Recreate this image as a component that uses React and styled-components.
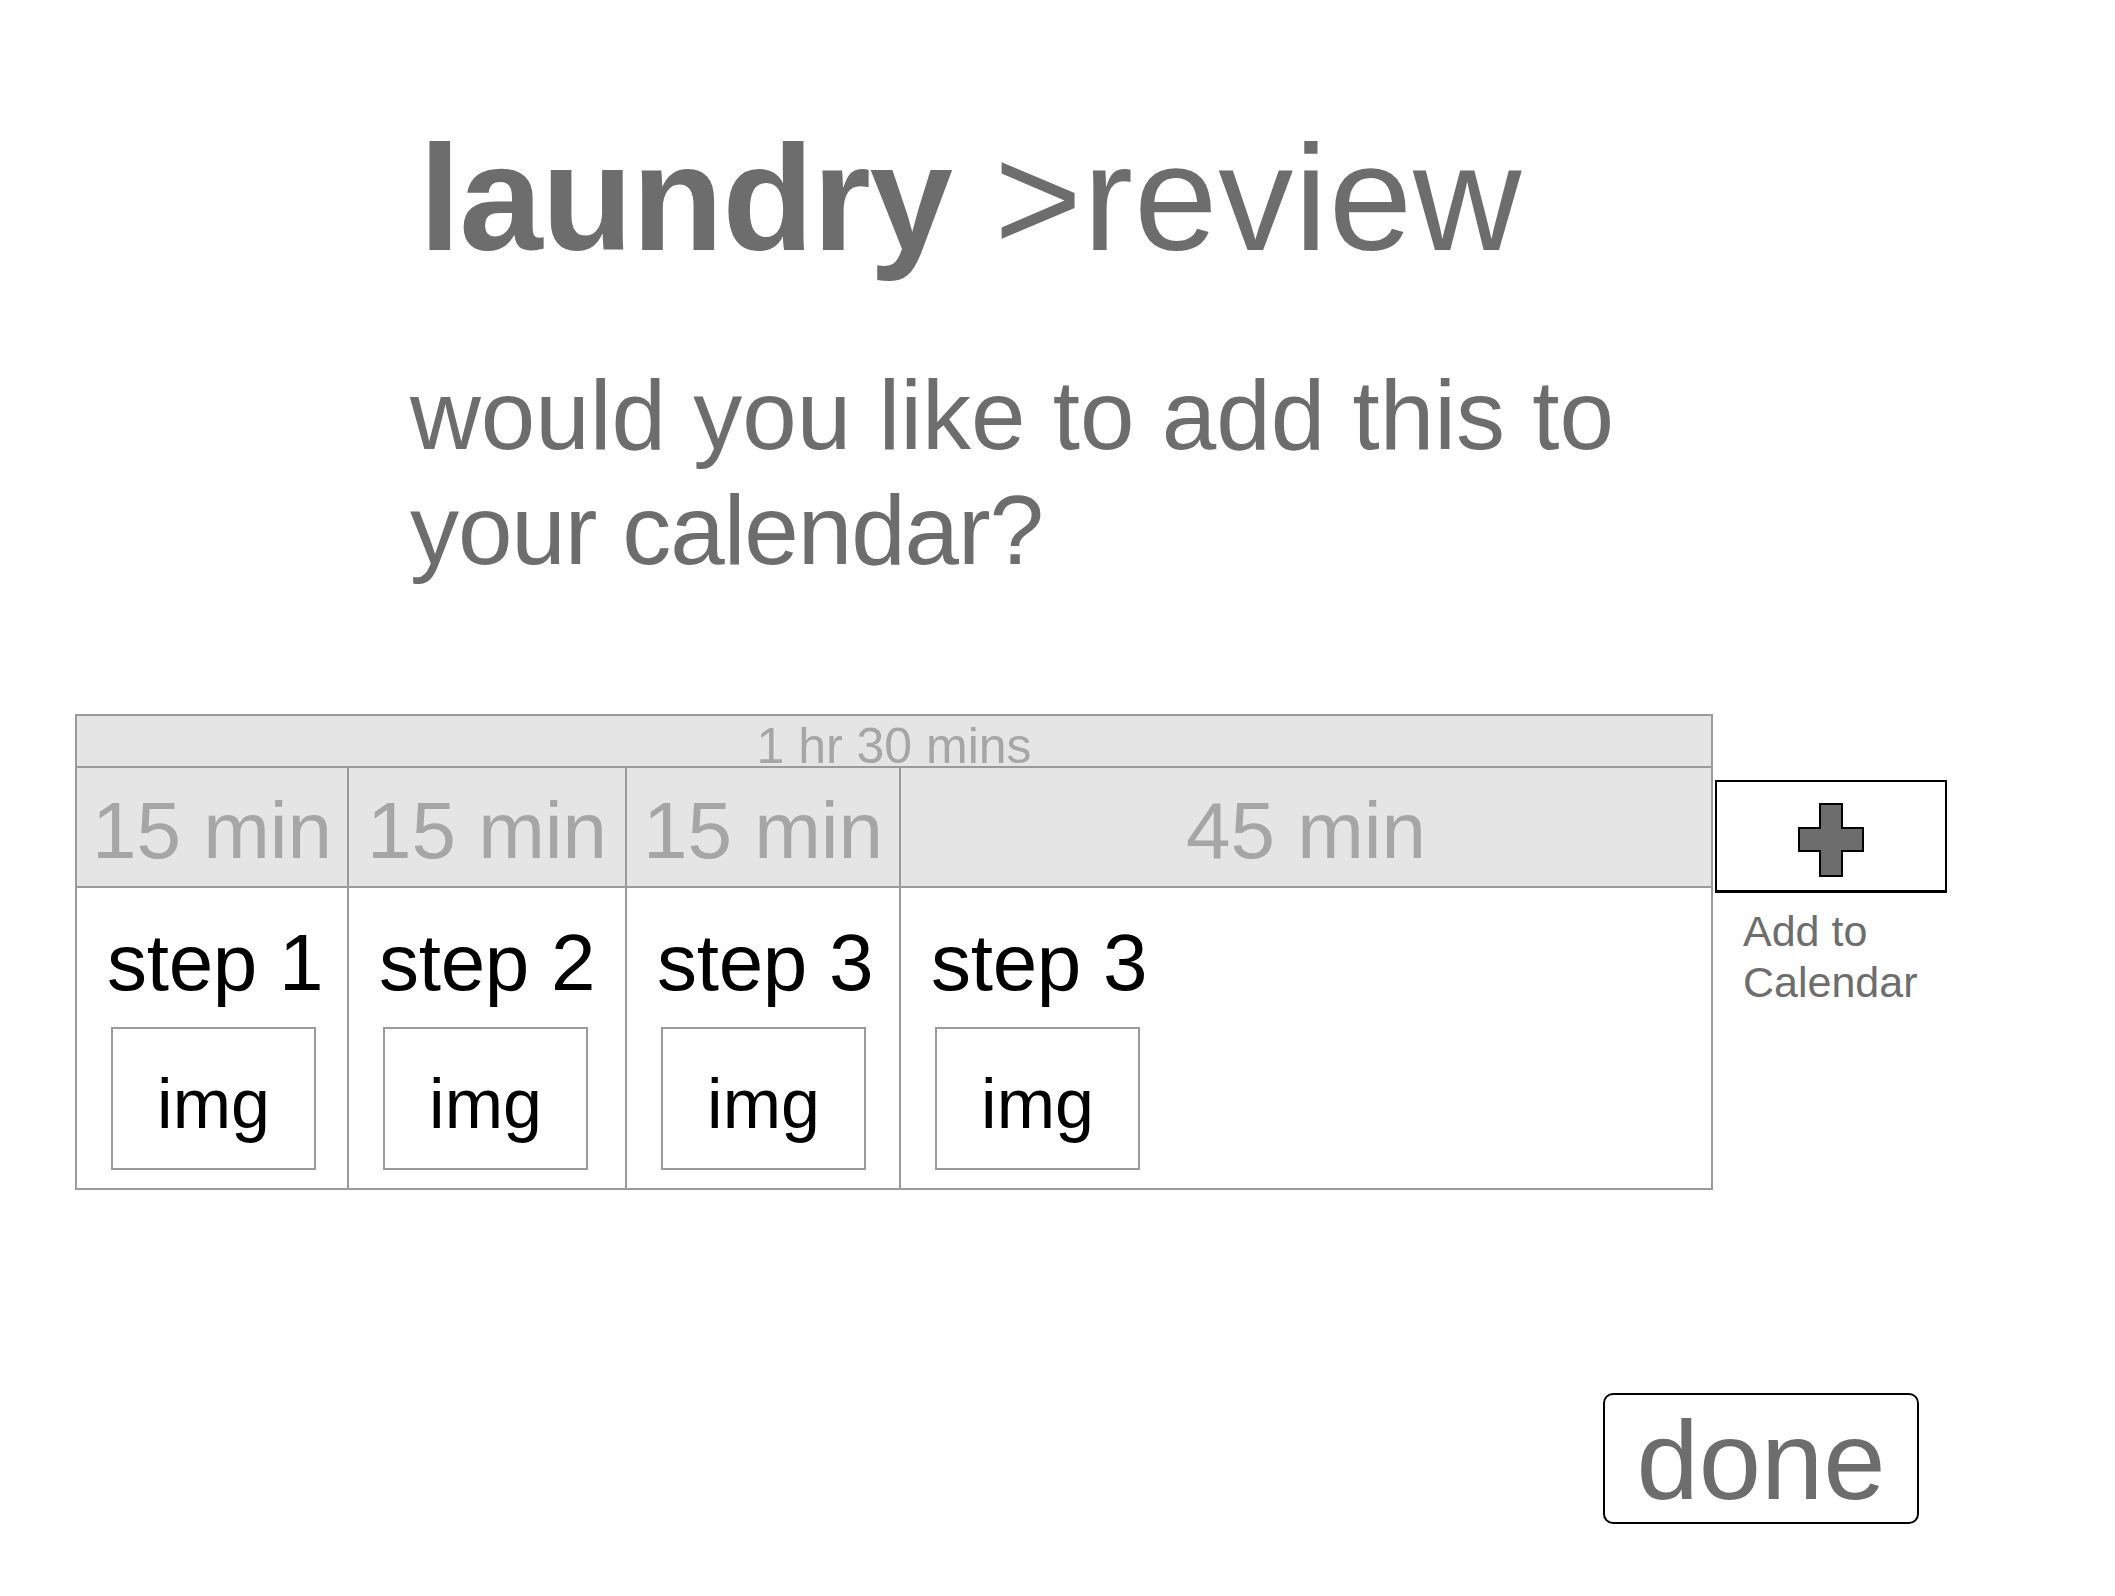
import React from 'react';
import styled, { createGlobalStyle } from 'styled-components';

const GlobalStyle = createGlobalStyle`
  html, body {
    margin: 0;
    padding: 0;
    background: #ffffff;
    font-family: "Liberation Sans", Arial, sans-serif;
  }
  * {
    box-sizing: border-box;
  }
`;

const steps = [
  { duration: '15 min', label: 'step 1' },
  { duration: '15 min', label: 'step 2' },
  { duration: '15 min', label: 'step 3' },
  { duration: '45 min', label: 'step 3' },
];

const PlusIcon = () => (
  <svg width="66" height="74" viewBox="0 0 66 74">
    <path
      d="M22 1 H44 V25 H65 V48 H44 V73 H22 V48 H1 V25 H22 Z"
      fill="#6d6d6d"
      stroke="#000"
      strokeWidth="2"
      strokeLinejoin="miter"
    />
  </svg>
);

const App = () => (
  <Page>
    <GlobalStyle />
    <Header>
      <Title>
        <strong>laundry</strong> &gt;review
      </Title>
      <Question>
        would you like to add this to
        <br />
        <Tight>your calendar?</Tight>
      </Question>
    </Header>

    <TimelineRow>
      <Table>
        <TotalBar>1 hr 30 mins</TotalBar>
        <Grid>
          {steps.map((step, i) => (
            <DurationCell key={`d${i}`} last={i === steps.length - 1}>
              {step.duration}
            </DurationCell>
          ))}
          {steps.map((step, i) => (
            <StepCell key={`s${i}`} last={i === steps.length - 1}>
              <StepLabel>{step.label}</StepLabel>
              <ImgBox>img</ImgBox>
            </StepCell>
          ))}
        </Grid>
      </Table>

      <CalendarAction>
        <AddButton type="button">
          <PlusIcon />
        </AddButton>
        <AddLabel>
          Add to
          <br />
          Calendar
        </AddLabel>
      </CalendarAction>
    </TimelineRow>

    <Footer>
      <DoneButton type="button">done</DoneButton>
    </Footer>
  </Page>
);

const Page = styled.div`
  width: 2115px;
  min-height: 1596px;
  padding-top: 123px;
  display: flex;
  flex-direction: column;
`;

const Header = styled.div`
  margin-left: 410px;
  color: #6d6d6d;
`;

const Title = styled.h1`
  margin: 0 0 0 9px;
  font-size: 150px;
  line-height: 150px;
  font-weight: 400;
  letter-spacing: 1px;
  white-space: nowrap;

  strong {
    font-weight: 700;
    letter-spacing: -1.3px;
  }
`;

const Question = styled.p`
  margin: 85px 0 0;
  font-size: 98px;
  line-height: 115px;
  font-weight: 400;
  white-space: nowrap;
`;

const Tight = styled.span`
  letter-spacing: -1.1px;
`;

const TimelineRow = styled.div`
  display: flex;
  align-items: flex-start;
  margin-top: 126px;
  margin-left: 75px;
`;

const Table = styled.div`
  width: 1638px;
  border: 2px solid #9a9a9a;
  background: #ffffff;
`;

const TotalBar = styled.div`
  height: 52px;
  padding-top: 5px;
  border-bottom: 2px solid #9a9a9a;
  background: #e5e5e5;
  color: #a6a6a6;
  font-size: 50px;
  line-height: 50px;
  text-align: center;
  white-space: nowrap;
`;

const Grid = styled.div`
  display: grid;
  grid-template-columns: 272px 278px 274px 1fr;
`;

const DurationCell = styled.div`
  height: 120px;
  padding-top: 7px;
  background: #e5e5e5;
  border-bottom: 2px solid #9a9a9a;
  border-right: ${props => (props.last ? 'none' : '2px solid #9a9a9a')};
  color: #a6a6a6;
  font-size: 80px;
  line-height: 112px;
  text-align: center;
  white-space: nowrap;
`;

const StepCell = styled.div`
  height: 300px;
  padding: 35px 0 0 34px;
  border-right: ${props => (props.last ? 'none' : '2px solid #9a9a9a')};
  display: flex;
  flex-direction: column;
  align-items: flex-start;
`;

const StepLabel = styled.div`
  margin-left: -4px;
  color: #000;
  font-size: 80px;
  line-height: 80px;
  letter-spacing: -0.3px;
  white-space: nowrap;
`;

const ImgBox = styled.div`
  margin-top: 24px;
  width: 205px;
  height: 143px;
  padding-top: 10px;
  border: 2px solid #9a9a9a;
  display: flex;
  align-items: center;
  justify-content: center;
  color: #000;
  font-size: 70px;
  line-height: 70px;
`;

const CalendarAction = styled.div`
  margin-top: 66px;
  margin-left: 2px;
  display: flex;
  flex-direction: column;
`;

const AddButton = styled.button`
  width: 232px;
  height: 113px;
  margin: 0;
  padding: 8px 0 0;
  background: #fff;
  border: 2px solid #000;
  border-bottom-width: 3px;
  border-radius: 0;
  display: flex;
  align-items: center;
  justify-content: center;
  cursor: pointer;
`;

const AddLabel = styled.div`
  margin: 13px 0 0 28px;
  color: #6d6d6d;
  font-size: 43px;
  line-height: 51px;
`;

const Footer = styled.div`
  margin-top: 203px;
  display: flex;
  justify-content: flex-end;
  padding-right: 196px;
`;

const DoneButton = styled.button`
  width: 316px;
  height: 131px;
  margin: 0;
  padding: 5px 0 0;
  background: #fff;
  border: 2px solid #000;
  border-radius: 10px;
  color: #6d6d6d;
  font-family: "Liberation Sans", Arial, sans-serif;
  font-size: 112px;
  line-height: 110px;
  display: flex;
  align-items: center;
  justify-content: center;
  cursor: pointer;
`;

export default App;
